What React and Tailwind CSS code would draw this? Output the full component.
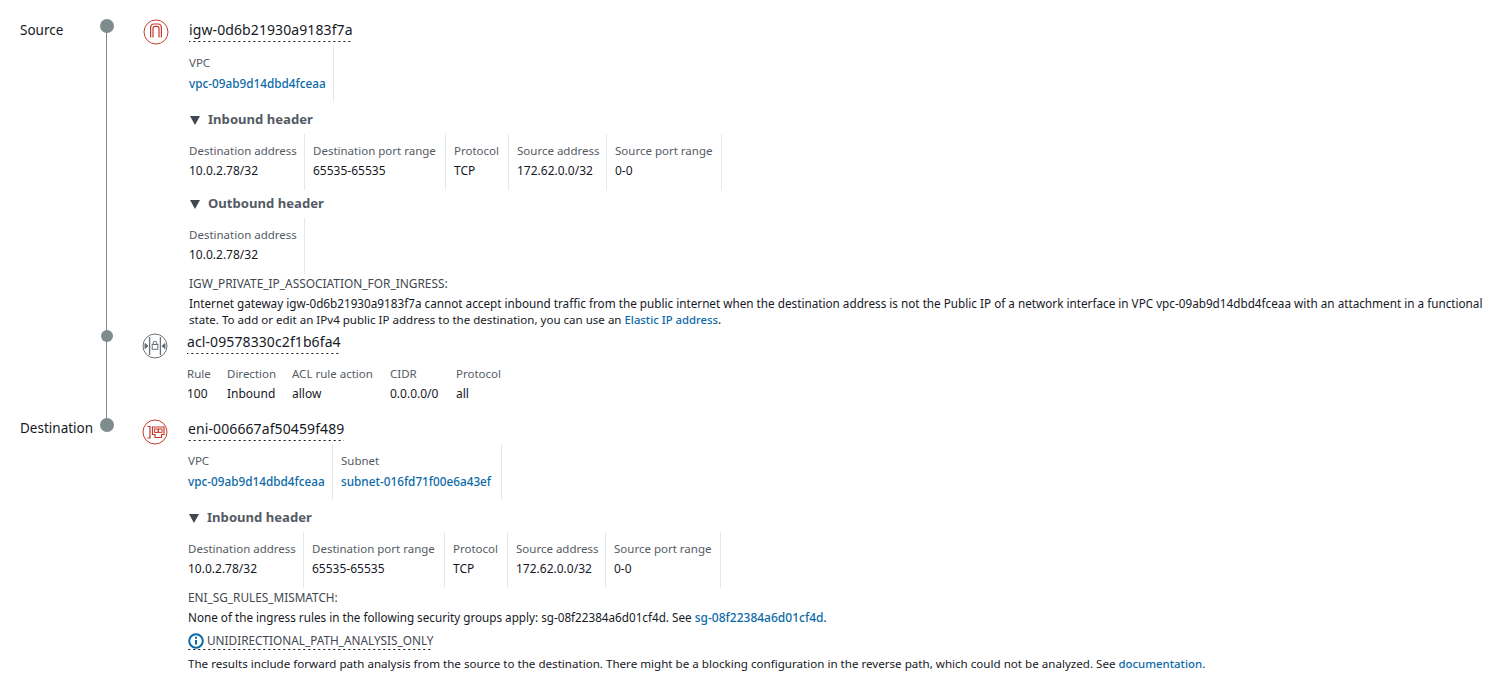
import React from "react";

const link = "text-[#0b6aa8] font-medium";

function IgwIcon() {
  return (
    <svg width="26" height="26" viewBox="0 0 26 26" fill="none" stroke="#c7392f" strokeWidth="1">
      <circle cx="13" cy="13" r="12" />
      <path d="M7.6 18.5V9Q7.6 5 11 5H15Q18.4 5 18.4 9V18.5" strokeWidth="1.2" />
      <path d="M10 18.5V9.6Q10 7.4 12 7.4H14Q16 7.4 16 9.6V18.5" strokeWidth="1.2" />
    </svg>
  );
}

function AclIcon() {
  return (
    <svg width="26" height="26" viewBox="0 0 26 26" fill="none" stroke="#687078" strokeWidth="1">
      <circle cx="13" cy="13" r="12" />
      <path d="M7.6 4V22M18.4 4V22" strokeWidth="1.3" />
      <path d="M3 10.5L6 13L3 15.5ZM23 10.5L20 13L23 15.5Z" fill="#687078" />
      <rect x="10.2" y="11.5" width="5.6" height="4.8" />
      <path d="M11.2 11.5V10A1.8 1.8 0 0 1 14.8 10V11.5" />
    </svg>
  );
}

function EniIcon() {
  return (
    <svg width="26" height="26" viewBox="0 0 26 26" fill="none" stroke="#c7392f" strokeWidth="1">
      <circle cx="13" cy="13" r="12" />
      <path d="M5.5 7.5H8V19H5.5" strokeWidth="1.2" />
      <path d="M10.5 8H22V15.5H19.5V18.5H13V15.5H10.5Z" strokeWidth="1.2" />
      <rect x="12.6" y="10" width="3.4" height="3.4" />
      <rect x="16.6" y="10" width="3.4" height="3.4" />
    </svg>
  );
}

function InfoIcon() {
  return (
    <svg width="16" height="16" viewBox="0 0 16 16" fill="none">
      <circle cx="8" cy="8" r="6.8" stroke="#0b6aa8" strokeWidth="2" />
      <path d="M8 7V11.6" stroke="#0b6aa8" strokeWidth="2" />
      <path d="M8 3.8V5.8" stroke="#0b6aa8" strokeWidth="2" />
    </svg>
  );
}

const dashed =
  "bg-[linear-gradient(to_right,#16191f_2px,transparent_2px)] bg-[length:5px_1px] bg-bottom bg-repeat-x";

function Title({ children }) {
  return (
    <div className={`h-[22px] w-fit text-[14px] leading-[20px] text-[#16191f] tracking-[0.1px] ${dashed}`}>
      {children}
    </div>
  );
}

function Fields({ items }) {
  return (
    <div className="flex">
      {items.map((it, i) => (
        <div
          key={it.label}
          className={`h-[56px] shrink-0 border-r border-[#e6e9ea] pt-[7px] ${it.w} ${i > 0 ? "pl-[8px]" : ""}`}
        >
          <div className="text-[11.5px] leading-[20px] text-[#545b64]">{it.label}</div>
          <div className={`leading-[20px] ${it.link ? `text-[11.75px] ${link}` : "text-[12px] text-[#16191f]"}`}>{it.value}</div>
        </div>
      ))}
    </div>
  );
}

function AclRules({ items }) {
  return (
    <div className="mb-[1px] mt-[10px] flex">
      {items.map((it) => (
        <div key={it.label} className={it.w}>
          <div className="text-[11.5px] leading-[20px] text-[#545b64]">{it.label}</div>
          <div className="text-[12px] leading-[20px] text-[#16191f]">{it.value}</div>
        </div>
      ))}
    </div>
  );
}

function Section({ children }) {
  return (
    <div className="flex h-[28px] items-center gap-[8px] text-[13.1px] font-bold text-[#545b64]">
      <span className="ml-[1px] h-0 w-0 border-x-[5.5px] border-t-[9px] border-x-transparent border-t-[#414750]" />
      {children}
    </div>
  );
}

const inbound = [
  { label: "Destination address", value: "10.0.2.78/32", w: "w-[116px]" },
  { label: "Destination port range", value: "65535-65535", w: "w-[141px]" },
  { label: "Protocol", value: "TCP", w: "w-[63px]" },
  { label: "Source address", value: "172.62.0.0/32", w: "w-[98px]" },
  { label: "Source port range", value: "0-0", w: "w-[115px]" },
];

export default function App() {
  return (
    <div className="h-[678px] w-[1507px] overflow-hidden bg-white pl-[20px] font-['Noto_Sans',sans-serif]">
      {/* Source */}
      <div className="flex">
        <div className="w-[80px] pt-[20px] text-[13.5px] leading-[20px] text-[#16191f]">Source</div>
        <div className="relative w-[14px]">
          <div className="mt-[19px] h-[14px] w-[14px] rounded-full bg-[#7f8c8d]" />
          <div className="absolute bottom-[-9px] left-[6px] top-[26px] w-[1px] bg-[#7f8c8d]" />
        </div>
        <div className="ml-[29px] mr-[20px] pt-[19px]"><IgwIcon /></div>
        <div className="flex-1 pt-[20px]">
          <Title>igw-0d6b21930a9183f7a</Title>
          <div className="mt-[4px]">
            <Fields items={[{ label: "VPC", value: "vpc-09ab9d14dbd4fceaa", link: true, w: "w-[145px]" }]} />
          </div>
          <div className="mt-[4px]">
            <Section>Inbound header</Section>
          </div>
          <Fields items={inbound} />
          <Section>Outbound header</Section>
          <Fields items={[inbound[0]]} />
          <div className="text-[11.72px] leading-[16px] text-[#16191f]">
            <div className="text-[11.9px] leading-[18px] text-[#414750]">IGW_PRIVATE_IP_ASSOCIATION_FOR_INGRESS:</div>
            <div className="mt-[3px] w-[1305px]">
              Internet gateway igw-0d6b21930a9183f7a cannot accept inbound traffic from the public internet when the destination address is not the Public IP of a network interface in VPC vpc-09ab9d14dbd4fceaa with an attachment in a functional <span className="text-[11.55px]">state. To add or edit an IPv4 public IP address to the destination, you can use an</span> <span className={`text-[11.3px] ${link}`}>Elastic IP address</span>.
            </div>
          </div>
        </div>
      </div>

      {/* ACL */}
      <div className="flex">
        <div className="w-[80px]" />
        <div className="relative w-[14px]">
          <div className="ml-[1px] mt-[2px] h-[12px] w-[12px] rounded-full bg-[#7f8c8d]" />
          <div className="absolute bottom-[-20px] left-[6px] top-[8px] w-[1px] bg-[#7f8c8d]" />
        </div>
        <div className="ml-[28px] mr-[19px] pt-[5px]"><AclIcon /></div>
        <div className="flex-1 pt-[4px]">
          <Title>acl-09578330c2f1b6fa4</Title>
          <AclRules
            items={[
              { label: "Rule", value: "100", w: "w-[40px]" },
              { label: "Direction", value: "Inbound", w: "w-[65px]" },
              { label: "ACL rule action", value: "allow", w: "w-[98px]" },
              { label: "CIDR", value: "0.0.0.0/0", w: "w-[66px]" },
              { label: "Protocol", value: "all", w: "w-[60px]" },
            ]}
          />
        </div>
      </div>

      {/* Destination */}
      <div className="flex">
        <div className="w-[80px] pt-[13px] text-[13.5px] leading-[20px] text-[#16191f]">Destination</div>
        <div className="w-[14px]">
          <div className="mt-[13px] h-[14px] w-[14px] rounded-full bg-[#7f8c8d]" />
        </div>
        <div className="ml-[28px] mr-[20px] pt-[14px]"><EniIcon /></div>
        <div className="flex-1 pt-[14px]">
          <Title>eni-006667af50459f489</Title>
          <div className="mt-[3px]">
            <Fields
              items={[
                { label: "VPC", value: "vpc-09ab9d14dbd4fceaa", link: true, w: "w-[145px]" },
                { label: "Subnet", value: "subnet-016fd71f00e6a43ef", link: true, w: "w-[169px]" },
              ]}
            />
          </div>
          <div className="mt-[4px]">
            <Section>Inbound header</Section>
          </div>
          <Fields items={inbound} />
          <div className="text-[11.7px] text-[#16191f]">
            <div className="text-[11.8px] leading-[18px] text-[#414750]">ENI_SG_RULES_MISMATCH:</div>
            <div className="mt-[1px] leading-[20px]">
              None of the ingress rules in the following security groups apply: sg-08f22384a6d01cf4d. See <span className={`text-[12px] ${link}`}>sg-08f22384a6d01cf4d</span>.
            </div>
            <div className={`mt-[4px] flex h-[18px] w-fit items-center gap-[3px] pb-[1px] text-[11.8px] text-[#414750] ${dashed}`}>
              <InfoIcon />
              UNIDIRECTIONAL_PATH_ANALYSIS_ONLY
            </div>
            <div className="mt-[4px] text-[11.6px] leading-[20px]">
              The results include forward path analysis from the source to the destination. There might be a blocking configuration in the reverse path, which could not be analyzed. See <span className={`text-[11.4px] ${link}`}>documentation</span>.
            </div>
          </div>
        </div>
      </div>
    </div>
  );
}
